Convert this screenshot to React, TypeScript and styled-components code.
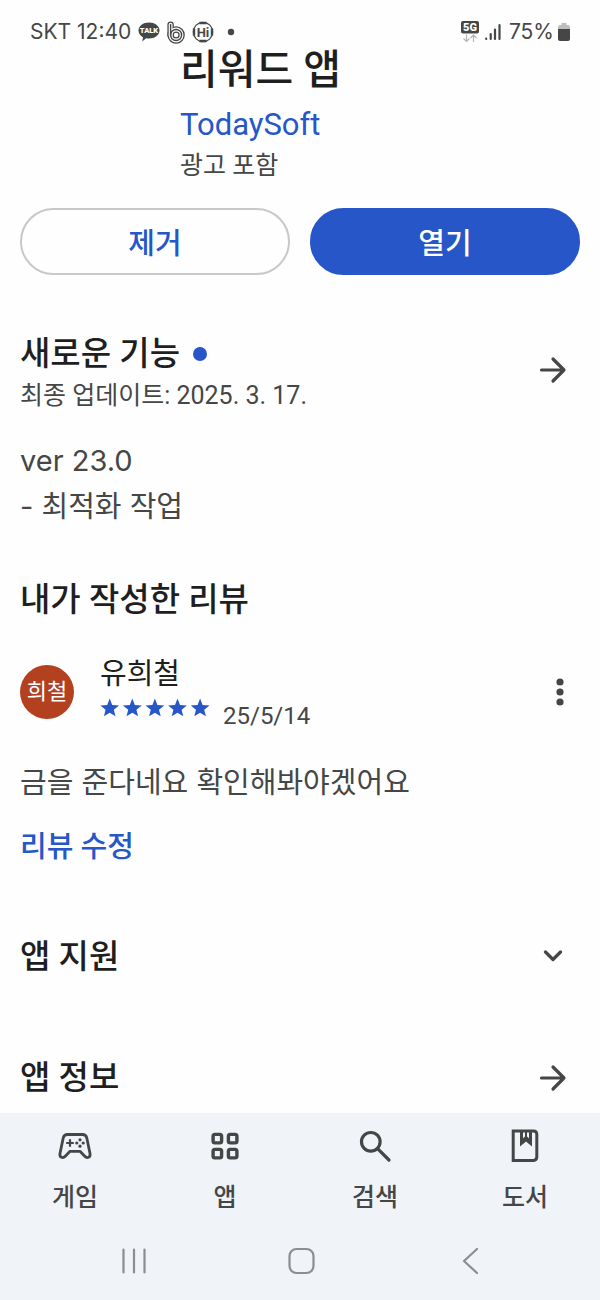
import React from "react";
import styled, { createGlobalStyle } from "styled-components";

const color = {
  ink: "#1f1f1f",
  body: "#444746",
  blue: "#2656c8",
  border: "#c8c8c8",
  bar: "#f0f3f8",
  avatar: "#b3401e",
  system: "#8b8e90",
};

const Global = createGlobalStyle`
  * { box-sizing: border-box; }
  body {
    margin: 0;
    background: #fefefe;
    color: ${color.body};
    font-family: Roboto, "Noto Sans CJK KR", sans-serif;
  }
  h1, h2, p { margin: 0; }
  button { font-family: inherit; border: 0; padding: 0; background: none; color: inherit; cursor: pointer; }
  svg { display: block; }
`;

const Page = styled.div`
  min-height: 100vh;
  display: flex;
  flex-direction: column;
`;

const StatusBar = styled.header`
  display: flex;
  align-items: center;
  justify-content: space-between;
  padding: 16px 30px 0;
  font-family: Inter, sans-serif;
  font-size: 21px;
  line-height: 32px;
`;

const StatusGroup = styled.div<{ $gap: number }>`
  display: flex;
  align-items: center;
  gap: ${(p) => p.$gap}px;
`;

const BatteryStatus = styled.span`
  display: flex;
  align-items: center;
  gap: 4px;
  padding-left: 2px;
`;

const Main = styled.main`
  flex: 1;
  padding: 0 20px 13px;
`;

const AppHeader = styled.section`
  padding-left: 160px;
`;

const AppTitle = styled.h1`
  color: ${color.ink};
  font-size: 41px;
  font-weight: 500;
  line-height: 44px;
`;

const Developer = styled.a`
  display: block;
  margin-top: 12px;
  color: ${color.blue};
  font-size: 31px;
  line-height: 42px;
  text-decoration: none;
`;

const Caption = styled.p`
  font-size: 25px;
  line-height: 40px;
`;

const Actions = styled.div`
  display: grid;
  grid-template-columns: 1fr 1fr;
  gap: 20px;
  margin-top: 22px;
`;

const ActionButton = styled.button<{ $filled?: boolean }>`
  && {
    height: 67px;
    padding-bottom: 2px;
    border: 2px solid ${(p) => (p.$filled ? color.blue : color.border)};
    border-radius: 34px;
    background: ${(p) => (p.$filled ? color.blue : "transparent")};
    color: ${(p) => (p.$filled ? "#fff" : color.blue)};
    font-size: 29px;
    font-weight: 500;
  }
`;

const Section = styled.section<{ $top: number }>`
  margin-top: ${(p) => p.$top}px;
`;

const SectionRow = styled.div`
  display: flex;
  justify-content: space-between;
  align-items: flex-start;
`;

const Heading = styled.h2`
  display: flex;
  align-items: center;
  gap: 13px;
  color: ${color.ink};
  font-size: 33px;
  font-weight: 500;
  line-height: 44px;
`;

const NewDot = styled.span`
  width: 14px;
  height: 14px;
  border-radius: 50%;
  background: ${color.blue};
`;

const IconButton = styled.button<{ $height: number; $width?: number }>`
  display: flex;
  align-items: center;
  justify-content: center;
  flex: none;
  width: ${(p) => p.$width ?? 54}px;
  height: ${(p) => p.$height}px;
`;

const BodyText = styled.p<{ $top: number }>`
  margin-top: ${(p) => p.$top}px;
  font-family: Inter, "Noto Sans CJK KR", sans-serif;
  font-size: 29px;
  line-height: 46px;
`;

const Review = styled.div`
  display: flex;
  align-items: flex-start;
  margin-top: 32px;
`;

const Avatar = styled.div`
  flex: none;
  width: 54px;
  height: 54px;
  margin: 11px 26px 0 0;
  border-radius: 50%;
  background: ${color.avatar};
  color: #fff;
  font-size: 22px;
  line-height: 54px;
  text-align: center;
`;

const ReviewMeta = styled.div`
  flex: 1;
`;

const Reviewer = styled.p`
  color: ${color.ink};
  font-size: 29px;
  line-height: 40px;
`;

const Rating = styled.div`
  display: flex;
  align-items: flex-start;
  gap: 13px;
  padding-top: 4px;
`;

const ReviewDate = styled.time`
  padding-top: 2px;
  font-size: 24px;
  line-height: 32px;
`;

const EditLink = styled.a`
  display: inline-block;
  margin-top: 19px;
  color: ${color.blue};
  font-size: 29px;
  font-weight: 500;
  line-height: 44px;
  text-decoration: none;
`;

const BottomArea = styled.footer`
  background: ${color.bar};
`;

const Tabs = styled.nav`
  display: grid;
  grid-template-columns: repeat(4, 1fr);
  padding: 16px 0 6px;
`;

const Tab = styled.a`
  display: flex;
  flex-direction: column;
  align-items: center;
  gap: 17px;
  color: ${color.body};
  font-size: 25px;
  font-weight: 500;
  line-height: 36px;
  text-decoration: none;
`;

const SystemBar = styled.div`
  display: grid;
  grid-template-columns: repeat(3, 1fr);
  justify-items: center;
  padding: 0 48px 0 50px;
  color: ${color.system};
`;

const TalkIcon = () => (
  <svg width="22" height="22" viewBox="0 0 22 22" aria-hidden="true">
    <path d="M11 1.500c5.800 0 10.500 3.500 10.500 8s-4.700 8-10.500 8c-1 0-2-.1-2.900-.3L4.300 20.500l.7-4.300C2.200 14.800.5 12.300.5 9.500c0-4.500 4.700-8 10.500-8z" fill={color.body} />
    <text x="11" y="12.300" textAnchor="middle" fontFamily="Roboto, sans-serif" fontWeight="900" fontSize="7.500" fill="#fff">TALK</text>
  </svg>
);

const BandIcon = () => (
  <svg width="18" height="23" viewBox="0 0 18 23" fill="none" aria-hidden="true">
    <g strokeLinecap="round">
      <path d="M3.600 3.600V14" stroke={color.body} strokeWidth="6.400" />
      <circle cx="9.100" cy="14" r="5.500" stroke={color.body} strokeWidth="6.400" />
      <path d="M3.600 3.600V14" stroke="#fefefe" strokeWidth="3.800" />
      <circle cx="9.100" cy="14" r="5.500" stroke="#fefefe" strokeWidth="3.800" />
      <path d="M3.600 3.600V14" stroke={color.body} strokeWidth="1.400" />
      <circle cx="9.100" cy="14" r="5.500" stroke={color.body} strokeWidth="1.400" />
    </g>
  </svg>
);

const HiIcon = () => (
  <svg width="22" height="22" viewBox="0 0 22 22" fill="none" stroke={color.body} aria-hidden="true">
    <circle cx="11" cy="11" r="9.700" strokeWidth="1.200" />
    <path d="M7.500 2h7M7.500 20h7M2 7.500v7M20 7.500v7" strokeWidth="2.400" />
    <text x="11" y="15.500" textAnchor="middle" fontFamily="Roboto, sans-serif" fontWeight="700" fontSize="13" fill={color.body} stroke="none">Hi</text>
  </svg>
);

const FiveGIcon = () => (
  <svg width="18" height="22" viewBox="0 0 18 22" aria-hidden="true">
    <rect width="18" height="12.500" rx="2" fill={color.body} />
    <text x="9" y="10.200" textAnchor="middle" fontFamily="Roboto, sans-serif" fontWeight="900" fontSize="11" fill="#fff">5G</text>
    <path d="M5.500 13.500v7M2.500 17.500l3 3 3-3M12.500 21v-7M9.500 17l3-3 3 3" stroke="#b5b5b5" strokeWidth="1.200" fill="none" />
  </svg>
);

const SignalIcon = () => (
  <svg width="16" height="18" viewBox="0 0 16 18" stroke={color.body} strokeWidth="2.200" strokeLinecap="round" aria-hidden="true">
    <path d="M1.200 15.500v.5M5.700 11v5M10 6.500v9.500M14.500 2v14" />
  </svg>
);

const BatteryIcon = () => (
  <svg width="12" height="18" viewBox="0 0 12 18" aria-hidden="true">
    <path d="M3.500 0h5v2H10q2 0 2 2v3H0V4q0-2 2-2h1.500z" fill="#bdbdbd" />
    <path d="M0 6h12v10q0 2-2 2H2q-2 0-2-2z" fill={color.body} />
  </svg>
);

const ArrowIcon = () => (
  <svg width="28" height="28" viewBox="0 0 28 28" fill="none" stroke={color.body} strokeWidth="3.200" strokeLinecap="round" strokeLinejoin="round" aria-hidden="true">
    <path d="M2.500 14H25M14 3l11 11-11 11" />
  </svg>
);

const ChevronIcon = () => (
  <svg width="20" height="12" viewBox="0 0 20 12" fill="none" stroke={color.body} strokeWidth="3.200" strokeLinecap="round" strokeLinejoin="round" aria-hidden="true">
    <path d="M2.500 2L10 9.500 17.500 2" />
  </svg>
);

const MoreIcon = () => (
  <svg width="8" height="28" viewBox="0 0 8 28" fill={color.body} aria-hidden="true">
    <circle cx="4" cy="4" r="3.600" />
    <circle cx="4" cy="14" r="3.600" />
    <circle cx="4" cy="24" r="3.600" />
  </svg>
);

const Stars = () => (
  <svg width="110" height="20" viewBox="0 0 110 20" fill={color.blue} role="img" aria-label="별표 5개">
    {[0, 1, 2, 3, 4].map((i) => (
      <path
        key={i}
        transform={`translate(${i * 22.6} 0)`}
        d="M9.700.6L12.200 6.900 19.100 7.400 13.800 11.700 15.500 18.300 9.700 14.700 3.900 18.300 5.600 11.700.3 7.400 7.200 6.900z"
      />
    ))}
  </svg>
);

const GamepadIcon = () => (
  <svg width="34" height="34" viewBox="0 0 34 34" fill="none" stroke={color.body} strokeWidth="2.800" strokeLinejoin="round" aria-hidden="true">
    <path d="M9.500 5.500h15q3.500 0 4.300 3.500l3.200 15.500q.6 3.500-2 4-1.800.4-3.500-1.500L22 22.300H12L7.500 27q-1.700 1.900-3.500 1.500-2.600-.5-2-4L5.200 9q.8-3.500 4.300-3.500z" />
    <path d="M12 10.200v7.600M8.200 14h7.600" strokeWidth="2.200" />
    <g fill={color.body} stroke="none">
      <circle cx="22" cy="10.800" r="1.600" />
      <circle cx="22" cy="17.200" r="1.600" />
      <circle cx="18.800" cy="14" r="1.600" />
      <circle cx="25.200" cy="14" r="1.600" />
    </g>
  </svg>
);

const AppsIcon = () => (
  <svg width="34" height="34" viewBox="0 0 34 34" fill="none" stroke={color.body} strokeWidth="3.400" aria-hidden="true">
    <rect x="5.100" y="5.400" width="8.500" height="8.500" rx="1.800" />
    <rect x="20.400" y="5.400" width="8.500" height="8.500" rx="1.800" />
    <rect x="5.100" y="20.400" width="8.500" height="8.500" rx="1.800" />
    <rect x="20.400" y="20.400" width="8.500" height="8.500" rx="1.800" />
  </svg>
);

const SearchIcon = () => (
  <svg width="34" height="34" viewBox="0 0 34 34" fill="none" stroke={color.body} strokeWidth="3.200" strokeLinecap="round" aria-hidden="true">
    <circle cx="12.800" cy="12.800" r="9.300" />
    <path d="M19.800 19.800L31 31" />
  </svg>
);

const BookIcon = () => (
  <svg width="34" height="34" viewBox="0 0 34 34" fill="none" stroke={color.body} strokeWidth="3" aria-hidden="true">
    <path d="M5.200 1.900h20.300q3.300 0 3.300 3.300v22.900q0 3.300-3.300 3.300H5.200z" />
    <path d="M12 2h12v15.500l-6-5-6 5z" fill={color.body} stroke="none" />
    <path d="M15 3.500h2v4l-2 1.800zM19 3.500h2v5.800l-2-1.800z" fill={color.bar} stroke="none" />
  </svg>
);

const RecentsIcon = () => (
  <svg width="28" height="28" viewBox="0 0 28 28" fill="none" stroke="currentColor" strokeWidth="2.200" strokeLinecap="round" aria-hidden="true">
    <path d="M3.500 2.500v23M14 2.500v23M24.500 2.500v23" />
  </svg>
);

const HomeIcon = () => (
  <svg width="28" height="28" viewBox="0 0 28 28" fill="none" stroke="currentColor" strokeWidth="2.200" aria-hidden="true">
    <rect x="2.500" y="2" width="24" height="24" rx="7" />
  </svg>
);

const BackIcon = () => (
  <svg width="28" height="28" viewBox="0 0 28 28" fill="none" stroke="currentColor" strokeWidth="2.200" strokeLinecap="round" strokeLinejoin="round" aria-hidden="true">
    <path d="M23 2L10 14l13 12" />
  </svg>
);

const tabs = [
  { label: "게임", Icon: GamepadIcon },
  { label: "앱", Icon: AppsIcon },
  { label: "검색", Icon: SearchIcon },
  { label: "도서", Icon: BookIcon },
];

const systemButtons = [
  { label: "최근 앱", Icon: RecentsIcon },
  { label: "홈", Icon: HomeIcon },
  { label: "뒤로", Icon: BackIcon },
];

export default function App() {
  return (
    <Page>
      <Global />
      <StatusBar>
        <StatusGroup $gap={7}>
          <span>SKT 12:40</span>
          <TalkIcon />
          <BandIcon />
          <HiIcon />
          <svg width="24" height="8" viewBox="0 0 24 8" aria-hidden="true">
            <circle cx="10" cy="4" r="3.200" fill={color.body} />
          </svg>
        </StatusGroup>
        <StatusGroup $gap={6}>
          <FiveGIcon />
          <SignalIcon />
          <BatteryStatus>75%<BatteryIcon /></BatteryStatus>
        </StatusGroup>
      </StatusBar>

      <Main>
        <AppHeader>
          <AppTitle>리워드 앱</AppTitle>
          <Developer href="#developer">TodaySoft</Developer>
          <Caption>광고 포함</Caption>
        </AppHeader>

        <Actions>
          <ActionButton type="button">제거</ActionButton>
          <ActionButton type="button" $filled>열기</ActionButton>
        </Actions>

        <Section $top={57}>
          <SectionRow>
            <div>
              <Heading>새로운 기능<NewDot /></Heading>
              <Caption>최종 업데이트: 2025. 3. 17.</Caption>
            </div>
            <IconButton type="button" aria-label="새로운 기능 더보기" $height={76}><ArrowIcon /></IconButton>
          </SectionRow>
          <BodyText $top={22}>ver 23.0<br />- 최적화 작업</BodyText>
        </Section>

        <Section $top={48}>
          <Heading>내가 작성한 리뷰</Heading>
          <Review>
            <Avatar>희철</Avatar>
            <ReviewMeta>
              <Reviewer>유희철</Reviewer>
              <Rating>
                <Stars />
                <ReviewDate dateTime="2025-05-14">25/5/14</ReviewDate>
              </Rating>
            </ReviewMeta>
            <IconButton type="button" aria-label="옵션" $height={76} $width={40}><MoreIcon /></IconButton>
          </Review>
          <BodyText $top={28}>금을 준다네요 확인해봐야겠어요</BodyText>
          <EditLink href="#edit">리뷰 수정</EditLink>
        </Section>

        <Section $top={66}>
          <SectionRow>
            <Heading>앱 지원</Heading>
            <IconButton type="button" aria-label="앱 지원 펼치기" $height={42}><ChevronIcon /></IconButton>
          </SectionRow>
        </Section>

        <Section $top={77}>
          <SectionRow>
            <Heading>앱 정보</Heading>
            <IconButton type="button" aria-label="앱 정보 더보기" $height={44}><ArrowIcon /></IconButton>
          </SectionRow>
        </Section>
      </Main>

      <BottomArea>
        <Tabs>
          {tabs.map(({ label, Icon }) => (
            <Tab key={label} href={`#${label}`}>
              <Icon />
              {label}
            </Tab>
          ))}
        </Tabs>
        <SystemBar>
          {systemButtons.map(({ label, Icon }) => (
            <IconButton key={label} type="button" aria-label={label} $height={78}><Icon /></IconButton>
          ))}
        </SystemBar>
      </BottomArea>
    </Page>
  );
}
